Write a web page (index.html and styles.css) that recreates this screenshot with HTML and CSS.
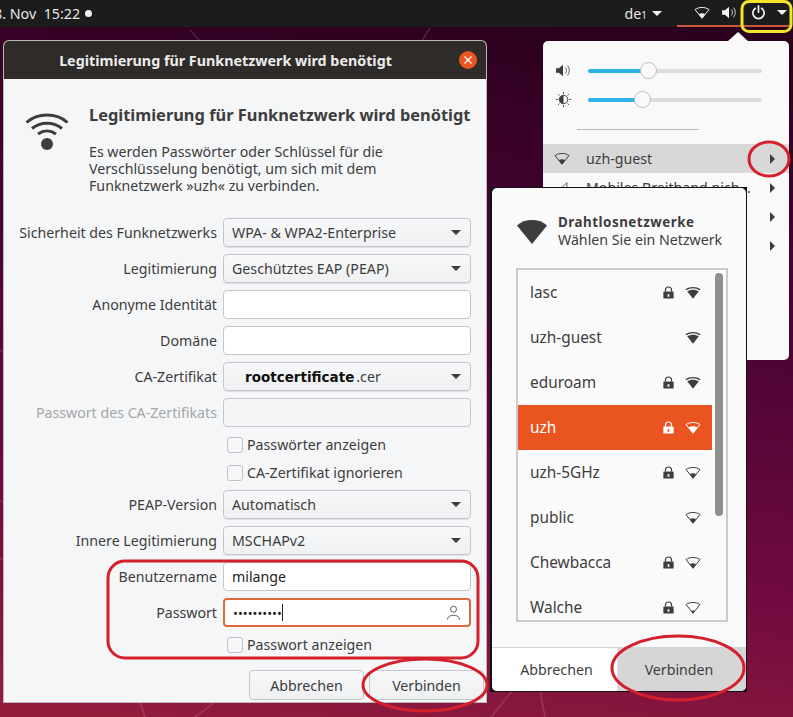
FILE: index.html
```html
<!DOCTYPE html>
<html lang="de">
<head>
    <meta charset="UTF-8">
    <title>Legitimierung für Funknetzwerk</title>
    <link rel="stylesheet" href="styles.css">
</head>
<body>
    <svg class="defs" width="0" height="0">
        <symbol id="wifi-4" viewBox="0 0 16 13"><path d="M.5 3.200C4.800.2 11.200.2 15.500 3.200l-.9 1.100C10.600 1.600 5.400 1.600 1.400 4.300z"/><path d="M2.200 5.300c3.500-2.200 8.100-2.200 11.600 0L8 12.800z"/></symbol>
        <symbol id="wifi-3" viewBox="0 0 16 13"><path d="M1 3.500C5 .8 11 .8 15 3.500L8 12.300z" fill="none" stroke="currentColor"/><path d="M3.600 6.300c2.700-1.500 6.100-1.500 8.800 0L8 12.300z"/></symbol>
        <symbol id="wifi-2" viewBox="0 0 16 13"><path d="M1 3.500C5 .8 11 .8 15 3.500L8 12.300z" fill="none" stroke="currentColor"/><path d="M4.900 7.900c2-.8 4.200-.8 6.200 0L8 12.300z"/></symbol>
        <symbol id="wifi-1" viewBox="0 0 16 13"><path d="M1 3.500C5 .8 11 .8 15 3.500L8 12.300z" fill="none" stroke="currentColor"/><path d="M6.400 9.800c1-.3 2.200-.3 3.200 0L8 12.300z"/></symbol>
        <symbol id="lock" viewBox="0 0 12 14"><path d="M1 6h10a.6.6 0 0 1 .6.6V13a.6.6 0 0 1-.6.6H1a.6.6 0 0 1-.6-.6V6.600A.6.6 0 0 1 1 6zm4 3v2.500h2V9z" fill-rule="evenodd"/><path d="M2.700 6V4.300a3.300 3.300 0 0 1 6.600 0V6" fill="none" stroke="currentColor" stroke-width="1.300"/></symbol>
        <symbol id="speaker" viewBox="0 0 16 14"><path d="M0 4.500h3L7.500.8v12.400L3 9.500H0z"/><path d="M10 3.800c1.600 1.700 1.600 4.700 0 6.400M12.300 1.800c2.600 2.900 2.600 7.500 0 10.400" fill="none" stroke="currentColor" stroke-width="1.100" opacity=".7"/></symbol>
    </svg>

    <div class="desktop">
        <svg class="rays" viewBox="0 0 793 717">
            <path d="M140 702l5 15M215 702l-20 15M491 717l22-27M540 691l5 26M0 350l4 3M0 500l4 4M0 560l4-3M190 30l10 11M430 28l-8 13"/>
        </svg>

        <header class="topbar">
            <div class="clock">8. Nov&nbsp; 15:22<span class="clock-dot"></span></div>
            <div class="tray">
                <span class="tray-lang">de<small>1</small></span>
                <span class="caret caret-lang"></span>
                <div class="tray-status">
                    <svg class="tray-wifi"><use href="#wifi-2"/></svg>
                    <svg class="tray-speaker"><use href="#speaker"/></svg>
                    <svg class="tray-power" viewBox="0 0 16 16"><path d="M4.700 3.500a6 6 0 1 0 6.600 0M8 1v6.500" fill="none" stroke="currentColor" stroke-width="1.800" stroke-linecap="round"/></svg>
                    <span class="caret"></span>
                </div>
            </div>
        </header>

        <!-- system menu -->
        <div class="menu-arrow"></div>
        <div class="menu">
            <div class="slider-row">
                <svg class="menu-icon"><use href="#speaker"/></svg>
                <div class="slider"><div class="slider-fill slider-volume"></div><span class="slider-knob"></span></div>
            </div>
            <div class="slider-row">
                <svg class="menu-icon" viewBox="0 0 16 16"><circle cx="8" cy="8" r="4.500" fill="none" stroke="currentColor"/><path d="M8 3.500a4.500 4.500 0 0 0 0 9z"/><path d="M8 0v2M8 14v2M0 8h2M14 8h2M2.300 2.300l1.400 1.400M12.300 12.300l1.400 1.400M2.300 13.700l1.400-1.400M12.300 3.700l1.400-1.400" stroke="currentColor" fill="none"/></svg>
                <div class="slider"><div class="slider-fill slider-bright"></div><span class="slider-knob"></span></div>
            </div>
            <div class="menu-sep"></div>
            <div class="menu-item menu-item-active">
                <svg class="menu-wifi"><use href="#wifi-2"/></svg>
                <span class="menu-label">uzh-guest</span>
                <span class="arrow-right"></span>
            </div>
            <div class="menu-item">
                <svg class="menu-wifi" viewBox="0 0 16 16"><path d="M14 2v12H2z" fill="none" stroke="currentColor"/></svg>
                <span class="menu-label">Mobiles Breitband nich...</span>
                <span class="arrow-right"></span>
            </div>
            <div class="menu-item"><span class="menu-label"></span><span class="arrow-right"></span></div>
            <div class="menu-item"><span class="menu-label"></span><span class="arrow-right"></span></div>
        </div>

        <!-- network chooser -->
        <div class="chooser">
            <div class="chooser-inner">
                <div class="chooser-head">
                    <svg class="chooser-icon" viewBox="0 0 30 25"><path d="M0 6.500C8-.8 22-.8 30 6.500L15 25z"/></svg>
                    <div>
                        <div class="chooser-title">Drahtlosnetzwerke</div>
                        <div class="chooser-sub">Wählen Sie ein Netzwerk</div>
                    </div>
                </div>
                <div class="net-box">
                    <div class="net-list">
                        <div class="net-row"><span class="net-name">lasc</span><svg class="net-lock"><use href="#lock"/></svg><svg class="net-wifi"><use href="#wifi-4"/></svg></div>
                        <div class="net-row"><span class="net-name">uzh-guest</span><svg class="net-wifi"><use href="#wifi-4"/></svg></div>
                        <div class="net-row"><span class="net-name">eduroam</span><svg class="net-lock"><use href="#lock"/></svg><svg class="net-wifi"><use href="#wifi-4"/></svg></div>
                        <div class="net-row net-row-active"><span class="net-name">uzh</span><svg class="net-lock"><use href="#lock"/></svg><svg class="net-wifi"><use href="#wifi-3"/></svg></div>
                        <div class="net-row"><span class="net-name">uzh-5GHz</span><svg class="net-lock"><use href="#lock"/></svg><svg class="net-wifi"><use href="#wifi-2"/></svg></div>
                        <div class="net-row"><span class="net-name">public</span><svg class="net-wifi"><use href="#wifi-2"/></svg></div>
                        <div class="net-row"><span class="net-name">Chewbacca</span><svg class="net-lock"><use href="#lock"/></svg><svg class="net-wifi"><use href="#wifi-2"/></svg></div>
                        <div class="net-row"><span class="net-name">Walche</span><svg class="net-lock"><use href="#lock"/></svg><svg class="net-wifi"><use href="#wifi-1"/></svg></div>
                    </div>
                    <div class="net-scroll"><span class="net-thumb"></span></div>
                </div>
                <div class="chooser-foot">
                    <div class="foot-btn foot-cancel">Abbrechen</div>
                    <div class="foot-btn foot-ok">Verbinden</div>
                </div>
            </div>
        </div>

        <!-- auth dialog -->
        <div class="dialog">
            <div class="dialog-titlebar">
                <span class="dialog-title">Legitimierung für Funknetzwerk wird benötigt</span>
                <span class="dialog-close"><svg viewBox="0 0 10 10"><path d="M1.500 1.500l7 7M8.500 1.500l-7 7" stroke="#fff" stroke-width="1.400"/></svg></span>
            </div>
            <div class="dialog-body">
                <div class="intro">
                    <svg class="intro-icon" viewBox="0 0 44 40"><path d="M1.500 11.500C12.500 1.500 31.500 1.500 42.500 11.500M7 17.500c8.500-7 21.500-7 30 0M13 23c5.500-4 12.500-4 18 0" fill="none" stroke="currentColor" stroke-width="3"/><circle cx="22" cy="33" r="6"/></svg>
                    <div>
                        <h1 class="intro-title">Legitimierung für Funknetzwerk wird benötigt</h1>
                        <p class="intro-text">Es werden Passwörter oder Schlüssel für die Verschlüsselung benötigt, um sich mit dem Funknetzwerk »uzh« zu verbinden.</p>
                    </div>
                </div>
                <div class="form">
                    <label class="form-label">Sicherheit des Funknetzwerks</label>
                    <div class="combo"><span>WPA- &amp; WPA2-Enterprise</span><i class="combo-caret"></i></div>
                    <label class="form-label">Legitimierung</label>
                    <div class="combo"><span>Geschütztes EAP (PEAP)</span><i class="combo-caret"></i></div>
                    <label class="form-label">Anonyme Identität</label>
                    <div class="entry"></div>
                    <label class="form-label">Domäne</label>
                    <div class="entry"></div>
                    <label class="form-label">CA-Zertifikat</label>
                    <div class="combo"><span class="cert-name"><b>rootcertificate</b>.cer</span><i class="combo-caret"></i></div>
                    <label class="form-label form-label-off">Passwort des CA-Zertifikats</label>
                    <div class="entry entry-off"></div>
                    <div class="check"><span class="check-box"></span>Passwörter anzeigen</div>
                    <div class="check"><span class="check-box"></span>CA-Zertifikat ignorieren</div>
                    <label class="form-label">PEAP-Version</label>
                    <div class="combo"><span>Automatisch</span><i class="combo-caret"></i></div>
                    <label class="form-label">Innere Legitimierung</label>
                    <div class="combo"><span>MSCHAPv2</span><i class="combo-caret"></i></div>
                    <label class="form-label">Benutzername</label>
                    <div class="entry entry-text">milange</div>
                    <label class="form-label">Passwort</label>
                    <div class="entry entry-focus">
                        <span class="pw-dots">••••••••••</span><span class="pw-cursor"></span>
                        <svg class="pw-user" viewBox="0 0 16 16"><circle cx="8" cy="4.500" r="3.200"/><path d="M1.500 15.500c0-6 13-6 13 0"/></svg>
                    </div>
                    <div class="check"><span class="check-box"></span>Passwort anzeigen</div>
                </div>
                <div class="dialog-actions">
                    <div class="btn">Abbrechen</div>
                    <div class="btn">Verbinden</div>
                </div>
            </div>
        </div>

        <!-- hand drawn marks on the screenshot -->
        <svg class="marks" viewBox="0 0 793 717">
            <rect class="mark-yellow" x="742" y="1.500" width="49" height="30" rx="7"/>
            <ellipse class="mark-red" cx="769" cy="159" rx="20" ry="17"/>
            <rect class="mark-red" x="108" y="561" width="370" height="97" rx="17"/>
            <ellipse class="mark-red" cx="425" cy="685" rx="62" ry="26"/>
            <ellipse class="mark-red" cx="678" cy="668" rx="66" ry="32"/>
        </svg>
    </div>
</body>
</html>
```

FILE: styles.css
```css
:root {
    --text: #3d3d3d;
    --border: #c4c8cc;
    --orange: #e95420;
    --dialog-bg: #f5f6f7;
}
html, body {
    margin: 0;
    padding: 0;
}
body {
    font-family: "Noto Sans", "Open Sans", sans-serif;
    font-size: 14.2px;
    color: var(--text);
    background-color: #2c001e;
}
.defs {
    position: absolute;
}
.desktop {
    position: relative;
    width: 793px;
    height: 717px;
    overflow: hidden;
    background: linear-gradient(188deg, #2a001d 4%, #4c0433 42%, #700a40 72%, #921c3c 98%);
}
.rays {
    position: absolute;
    inset: 0;
    fill: none;
    stroke: rgba(255, 255, 255, 0.14);
    stroke-width: 1.5;
}

/* top bar */
.topbar {
    position: relative;
    display: flex;
    justify-content: space-between;
    height: 27px;
    background-color: #1c1c1c;
    color: #e6e6e6;
}
.clock {
    display: flex;
    align-items: center;
    margin-left: -6px;
    height: 26px;
    font-size: 14.300px;
    white-space: pre;
}
.clock-dot {
    width: 7px;
    height: 7px;
    margin-left: 5px;
    border-radius: 50%;
    background-color: #f2f2f2;
}
.tray {
    display: flex;
    align-items: center;
    height: 27px;
    padding-right: 4px;
}
.tray-lang small {
    font-size: 10px;
}
.caret {
    width: 0;
    height: 0;
    border-left: 5px solid transparent;
    border-right: 5px solid transparent;
    border-top: 5px solid #f2f2f2;
}
.caret-lang {
    margin-left: 5px;
    margin-right: 15px;
}
.tray-status {
    display: flex;
    align-items: center;
    width: 112px;
    height: 25px;
    border-bottom: 2px solid #c9573a;
    color: #f2f2f2;
}
.tray-wifi {
    width: 16px;
    height: 13px;
    margin-left: 17px;
}
.tray-speaker {
    width: 15px;
    height: 13px;
    margin-left: 12px;
}
.tray-power {
    width: 15px;
    height: 15px;
    margin-left: 14px;
    margin-right: 11px;
}
.tray svg {
    fill: currentColor;
}

/* system menu */
.menu-arrow {
    position: absolute;
    left: 728px;
    top: 32px;
    width: 0;
    height: 0;
    border-left: 10px solid transparent;
    border-right: 10px solid transparent;
    border-bottom: 9px solid #f9f9f9;
}
.menu {
    position: absolute;
    left: 543px;
    top: 41px;
    width: 246px;
    height: 319px;
    box-sizing: border-box;
    padding-top: 15px;
    background-color: #f9f9f9;
    border-radius: 5px;
}
.slider-row {
    display: flex;
    align-items: center;
    height: 29px;
    padding-left: 13px;
}
.menu-icon {
    width: 15px;
    height: 15px;
    fill: var(--text);
    color: var(--text);
}
.slider {
    position: relative;
    display: flex;
    align-items: center;
    width: 174px;
    height: 4px;
    margin-left: 17px;
    background-color: #dcdcdc;
    border-radius: 2px;
}
.slider-fill {
    height: 4px;
    background-color: #2eb1e6;
    border-radius: 2px;
}
.slider-volume {
    width: 60px;
}
.slider-bright {
    width: 54px;
}
.slider-knob {
    width: 15px;
    height: 15px;
    margin-left: -8px;
    background-color: #fafafa;
    border: 1px solid #bdbdbd;
    border-radius: 50%;
    flex-shrink: 0;
}
.menu-sep {
    width: 122px;
    height: 1px;
    margin: 15px 0 14px 34px;
    background-color: #bcbcbc;
}
.menu-item {
    display: flex;
    align-items: center;
    height: 29px;
    padding: 0 14px 0 11px;
}
.menu-item-active {
    background-color: #d8d8d8;
}
.menu-wifi {
    width: 16px;
    height: 13px;
    margin-right: 16px;
    fill: var(--text);
    color: var(--text);
}
.menu-label {
    flex: 1;
    white-space: nowrap;
}
.arrow-right {
    width: 0;
    height: 0;
    border-top: 5px solid transparent;
    border-bottom: 5px solid transparent;
    border-left: 5px solid #3d3d3d;
}

/* network chooser */
.chooser {
    position: absolute;
    left: 490px;
    top: 187px;
    width: 257px;
    height: 505px;
    background-color: #111;
}
.chooser-inner {
    display: flex;
    flex-direction: column;
    height: 503px;
    margin: 1px 1px 0 2px;
    background-color: #fafafa;
    border-radius: 5px;
    overflow: hidden;
}
.chooser-head {
    display: flex;
    align-items: center;
    height: 80px;
    padding: 6px 0 0 25px;
    box-sizing: border-box;
    flex-shrink: 0;
}
.chooser-icon {
    width: 30px;
    height: 25px;
    margin-right: 11px;
    fill: #3d3d3d;
}
.chooser-title {
    font-size: 13.400px;
    font-weight: 700;
    line-height: 17px;
    letter-spacing: 0.5px;
}
.chooser-sub {
    font-size: 14.200px;
    line-height: 17px;
}
.net-box {
    position: relative;
    display: flex;
    width: 212px;
    height: 354px;
    margin-left: 24px;
    box-sizing: border-box;
    border: 2px solid #c8ccd0;
    flex-shrink: 0;
}
.net-list {
    width: 194px;
    overflow: hidden;
}
.net-row {
    display: flex;
    align-items: center;
    height: 45px;
    padding: 0 11px 0 12px;
    font-size: 15.400px;
}
.net-row-active {
    background-color: var(--orange);
    color: #fff;
}
.net-name {
    flex: 1;
}
.net-row svg {
    fill: currentColor;
    color: inherit;
}
.net-lock {
    width: 11px;
    height: 13px;
    margin-right: 11px;
}
.net-wifi {
    width: 16px;
    height: 13px;
}
.net-scroll {
    flex: 1;
    padding: 3px 0 0 3px;
}
.net-thumb {
    display: block;
    width: 8px;
    height: 243px;
    background-color: #8f8f8f;
    border-radius: 4px;
}
.chooser-foot {
    display: flex;
    margin-top: 25px;
    flex: 1;
    border-top: 1px solid #cfd2d6;
}
.foot-btn {
    display: flex;
    align-items: center;
    justify-content: center;
}
.foot-cancel {
    width: 121px;
    padding-left: 4px;
    background-color: #fff;
    border-right: 1px solid #e0e0e0;
}
.foot-ok {
    flex: 1;
    padding-right: 6px;
    background-color: #d6d6d6;
}

/* auth dialog */
.dialog {
    position: absolute;
    left: 4px;
    top: 41px;
    width: 482px;
    height: 661px;
    background-color: var(--dialog-bg);
    border-radius: 5px 5px 0 0;
    box-shadow: 0 0 0 1px #b9b9b9;
    overflow: hidden;
}
.dialog-titlebar {
    position: relative;
    display: flex;
    align-items: center;
    justify-content: center;
    height: 38px;
    background-color: #2f2b29;
    color: #ececec;
}
.dialog-title {
    font-weight: 700;
    font-size: 14.300px;
    margin-right: 39px;
}
.dialog-close {
    position: absolute;
    right: 9px;
    top: 10px;
    display: flex;
    align-items: center;
    justify-content: center;
    width: 18px;
    height: 18px;
    background-color: var(--orange);
    border-radius: 50%;
}
.dialog-close svg {
    width: 10px;
    height: 10px;
}
.dialog-body {
    padding: 24px 0 0 0;
}
.intro {
    display: flex;
    height: 115px;
    padding-left: 21px;
}
.intro-icon {
    width: 44px;
    height: 40px;
    margin: 8px 20px 0 0;
    fill: #3d3d3d;
    color: #3d3d3d;
    flex-shrink: 0;
}
.intro-title {
    margin: 0;
    font-size: 16.400px;
    line-height: 24px;
    font-weight: 700;
    white-space: nowrap;
}
.intro-text {
    width: 340px;
    margin: 16px 0 0 0;
    line-height: 17px;
}
.form {
    display: grid;
    grid-template-columns: 213px 248px;
    column-gap: 6px;
    row-gap: 7px;
    grid-auto-rows: min-content;
}
.form-label {
    display: flex;
    align-items: center;
    justify-content: flex-end;
    white-space: nowrap;
}
.form-label-off {
    color: #a4a7a9;
}
.combo, .entry {
    display: flex;
    align-items: center;
    height: 29px;
    box-sizing: border-box;
    border: 1px solid #c3c7cb;
    border-radius: 4px;
}
.combo {
    justify-content: space-between;
    padding: 0 9px 0 8px;
    background: linear-gradient(#f7f8f9, #eef0f1);
    box-shadow: 0 1px 0 rgba(0, 0, 0, 0.08);
}
.combo-caret {
    width: 0;
    height: 0;
    border-left: 5px solid transparent;
    border-right: 5px solid transparent;
    border-top: 5px solid #3d3d3d;
}
.cert-name {
    padding-left: 13px;
}
.cert-name b {
    margin-right: 2px;
    font-family: "DejaVu Sans", sans-serif;
    font-size: 13.500px;
    color: #111;
}
.entry {
    background-color: #fff;
}
.entry-off {
    background-color: #f4f5f6;
}
.entry-text {
    padding-left: 8px;
    color: #222;
}
.entry-focus {
    padding-left: 8px;
    border: 2px solid #dd6a3a;
}
.pw-dots {
    font-size: 13px;
    color: #222;
}
.pw-cursor {
    width: 1px;
    height: 17px;
    background-color: #222;
}
.pw-user {
    width: 15px;
    height: 15px;
    margin-left: auto;
    margin-right: 8px;
    fill: none;
    stroke: #555;
    stroke-width: 1;
}
.check {
    grid-column: 2;
    display: flex;
    align-items: center;
    height: 21px;
    padding-left: 4px;
}
.check-box {
    width: 14px;
    height: 14px;
    margin-right: 4px;
    background-color: #f5f6f7;
    border: 1px solid #bfc3c7;
    border-radius: 3px;
}
.dialog-actions {
    display: flex;
    gap: 5px;
    margin: 15px 0 0 245px;
}
.btn {
    display: flex;
    align-items: center;
    justify-content: center;
    width: 115px;
    height: 30px;
    box-sizing: border-box;
    background: linear-gradient(#f7f8f9, #eef0f1);
    border: 1px solid #c3c7cb;
    border-radius: 4px;
}

/* marks */
.marks {
    position: absolute;
    inset: 0;
    fill: none;
    stroke-width: 3;
}
.mark-red {
    stroke: #d4202c;
}
.mark-yellow {
    stroke: #f5e52a;
}
```
